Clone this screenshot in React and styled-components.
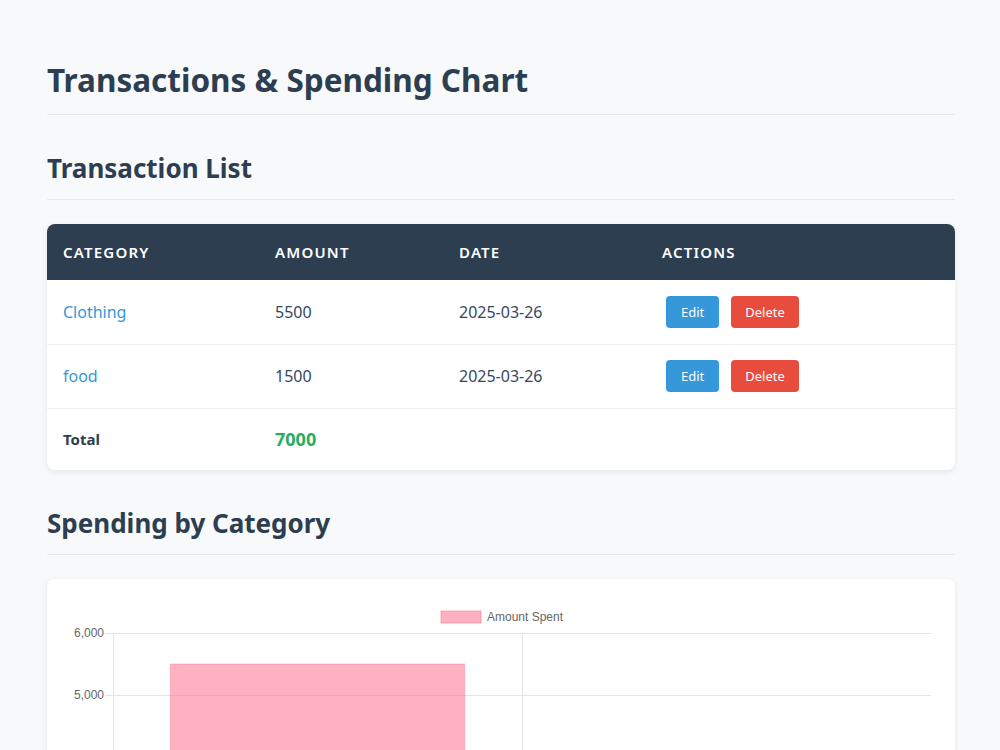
import React from "react";
import styled, { createGlobalStyle } from "styled-components";

const Global = createGlobalStyle`
  html, body { margin: 0; padding: 0; background: #f7f9fb; }
  body { font-family: "Noto Sans", "Open Sans", sans-serif; color: #2c3e50; }
  * { box-sizing: border-box; }
`;

const Page = styled.div`
  padding: 48px 45px 40px 47px;
  width: 1000px;
`;

const Title = styled.h1`
  margin: 0 0 28px;
  padding: 12px 0 14px;
  font-size: 31.5px;
  line-height: 40px;
  font-weight: 700;
  color: #2c3e50;
  border-bottom: 1px solid #e6e9ed;
`;

const SectionTitle = styled.h2`
  margin: 0 0 24px;
  padding: 8px 0 14px;
  font-size: 26px;
  line-height: 34px;
  font-weight: 700;
  color: #2c3e50;
  border-bottom: 1px solid #e6e9ed;
`;

const Card = styled.div`
  background: #fff;
  border-radius: 8px;
  box-shadow: 0 2px 6px rgba(0, 0, 0, 0.08);
  overflow: hidden;
  margin-bottom: 28px;
`;

const Table = styled.table`
  width: 100%;
  border-collapse: collapse;
  table-layout: fixed;
`;

const Th = styled.th`
  background: #2c3e50;
  color: #fff;
  text-align: left;
  height: 56px;
  padding: 0 16px;
  font-size: 15px;
  font-weight: 600;
  letter-spacing: 1.2px;
  text-transform: uppercase;
  width: ${(p) => p.$w}px;
`;

const Td = styled.td`
  height: ${(p) => (p.$total ? 62 : 64)}px;
  padding: 0 16px;
  font-size: 16px;
  color: #34495e;
  border-bottom: ${(p) => (p.$total ? "none" : "1px solid #eef0f2")};
`;

const CategoryLink = styled.span`
  color: #3498db;
`;

const TotalLabel = styled.span`
  font-weight: 700;
  font-size: 15px;
  color: #2c3e50;
`;

const TotalValue = styled.span`
  font-weight: 700;
  font-size: 18px;
  color: #27ae60;
`;

const Actions = styled.div`
  display: flex;
  gap: 12px;
  padding-left: 4px;
`;

const Button = styled.button`
  border: none;
  border-radius: 4px;
  height: 32px;
  padding: 0 ${(p) => (p.$danger ? 14 : 15)}px;
  font-family: inherit;
  font-size: 13px;
  color: #fff;
  background: ${(p) => (p.$danger ? "#e74c3c" : "#3498db")};
  cursor: pointer;
`;

const ChartCard = styled.div`
  background: #fff;
  border-radius: 8px;
  box-shadow: 0 2px 6px rgba(0, 0, 0, 0.08);
  padding: 20px;
`;

const rows = [
  { category: "Clothing", amount: 5500, date: "2025-03-26" },
  { category: "food", amount: 1500, date: "2025-03-26" },
];

function BarChart() {
  const W = 868;
  const H = 434;
  const left = 46;
  const right = 864;
  const top = 34;
  const zero = 406;
  const unit = 62 / 1000;
  const cat = (right - left) / rows.length;
  const grid = "#e5e5e5";
  const ticks = [0, 1000, 2000, 3000, 4000, 5000, 6000];
  const font = '"Liberation Sans", Arial, sans-serif';
  return (
    <svg width={W} height={H} viewBox={`0 0 ${W} ${H}`} style={{ display: "block" }}>
      <rect x={374} y={12} width={40} height={12} fill="rgba(255,99,132,0.5)" stroke="rgba(255,99,132,0.5)" />
      <text x={420} y={22} fontFamily={font} fontSize={12} fill="#666">Amount Spent</text>
      {ticks.map((t) => {
        const y = zero - t * unit;
        return (
          <g key={t}>
            <line x1={left - 8} x2={right} y1={y + 0.5} y2={y + 0.5} stroke={grid} />
            <text x={37} y={y + 4} textAnchor="end" fontFamily={font} fontSize={12} fill="#666">
              {t.toLocaleString("en-US")}
            </text>
          </g>
        );
      })}
      {[0, 1].map((i) => (
        <line key={i} x1={left + i * cat + 0.5} x2={left + i * cat + 0.5} y1={top} y2={zero + 8} stroke={grid} />
      ))}
      {rows.map((r, i) => {
        const bw = cat * 0.72;
        const x = left + i * cat + (cat - bw) / 2;
        const y = zero - r.amount * unit;
        return (
          <g key={r.category}>
            <rect x={x} y={y} width={bw} height={zero - y} fill="rgba(255,99,132,0.5)" stroke="rgba(255,99,132,0.3)" />
            <text x={left + i * cat + cat / 2} y={zero + 20} textAnchor="middle" fontFamily={font} fontSize={12} fill="#666">
              {r.category}
            </text>
          </g>
        );
      })}
    </svg>
  );
}

export default function App() {
  const total = rows.reduce((s, r) => s + r.amount, 0);
  return (
    <>
      <Global />
      <Page>
        <Title>Transactions &amp; Spending Chart</Title>
        <SectionTitle>Transaction List</SectionTitle>
        <Card>
          <Table>
            <thead>
              <tr>
                <Th $w={212}>Category</Th>
                <Th $w={184}>Amount</Th>
                <Th $w={203}>Date</Th>
                <Th $w={309}>Actions</Th>
              </tr>
            </thead>
            <tbody>
              {rows.map((r) => (
                <tr key={r.category}>
                  <Td><CategoryLink>{r.category}</CategoryLink></Td>
                  <Td>{r.amount}</Td>
                  <Td>{r.date}</Td>
                  <Td>
                    <Actions>
                      <Button>Edit</Button>
                      <Button $danger>Delete</Button>
                    </Actions>
                  </Td>
                </tr>
              ))}
              <tr>
                <Td $total><TotalLabel>Total</TotalLabel></Td>
                <Td $total><TotalValue>{total}</TotalValue></Td>
                <Td $total />
                <Td $total />
              </tr>
            </tbody>
          </Table>
        </Card>
        <SectionTitle>Spending by Category</SectionTitle>
        <ChartCard>
          <BarChart />
        </ChartCard>
      </Page>
    </>
  );
}
